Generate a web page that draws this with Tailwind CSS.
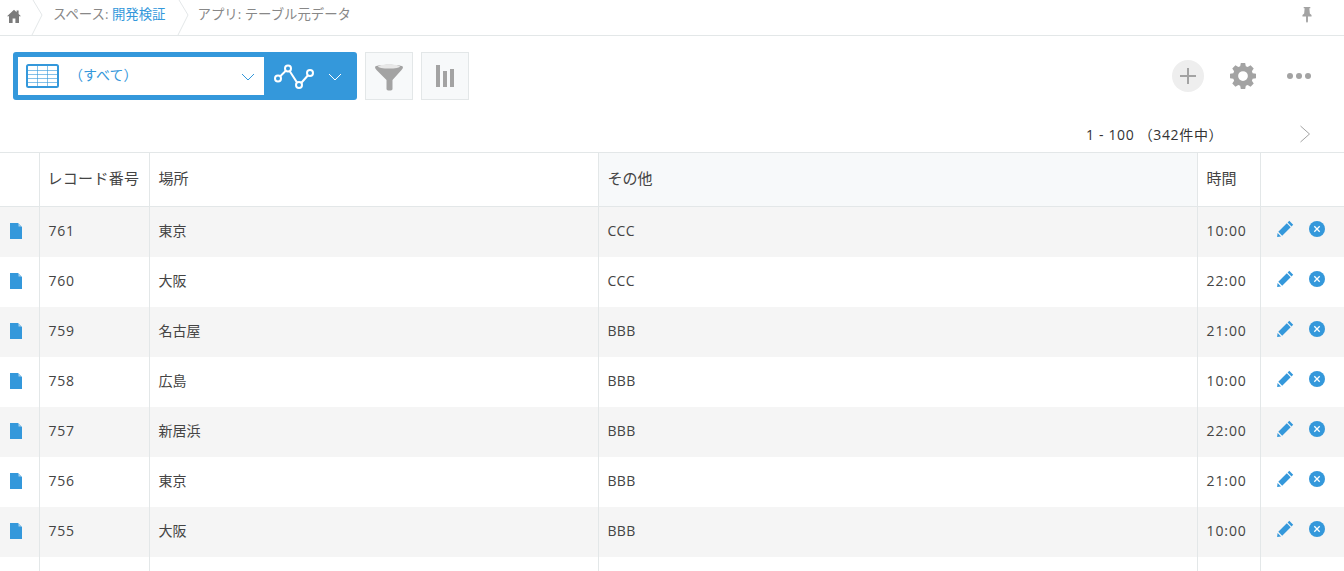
<!DOCTYPE html>
<html lang="ja">
  <head>
    <meta charset="UTF-8" />
    <title>アプリ: テーブル元データ</title>
    <script src="https://cdn.jsdelivr.net/npm/@tailwindcss/browser@4"></script>
  </head>
  <body class="bg-white h-[571px] w-[1344px] overflow-hidden text-[14px] text-[#444] font-['Open_Sans','Noto_Sans_CJK_JP',sans-serif]">
    <!-- breadcrumb -->
    <div class="h-9 border-b border-[#e3e7e8] flex items-center relative text-[#888]">
      <div class="w-[28px] flex justify-center pb-[4px]">
        <svg width="14" height="14" viewBox="0 0 14 14" fill="#7b7b7b"><path d="M7 .8 0 7.2h2V14h3.6V9.4h2.8V14H12V7.2h2L11.6 5V1.4H9.6v1.8z" /></svg>
      </div>
      <svg class="absolute left-[30px] top-0" width="14" height="35" viewBox="0 0 14 35" fill="none" stroke="#e3e7e8"><path d="M3 0l9 15-10 20" /></svg>
      <div class="ml-[25px] pb-[6px] text-[13.4px] leading-none">スペース: <span class="text-[#3498db]">開発検証</span></div>
      <svg class="absolute left-[176px] top-0" width="14" height="35" viewBox="0 0 14 35" fill="none" stroke="#e3e7e8"><path d="M3 0l9 15-10 20" /></svg>
      <div class="ml-[32px] pb-[6px] text-[13.4px] leading-none">アプリ: テーブル元データ</div>
      <svg class="absolute left-[1300px] top-[6px]" width="14" height="17" viewBox="0 0 14 18" fill="#a3a3a3"><path d="M3.500 1h7v1.500H9.500L10 8l1.800 1.500V11H8v5.500L7 18l-1-1.500V11H2.200V9.500L4 8l.5-5.500h-1z" /></svg>
    </div>

    <!-- toolbar -->
    <div class="h-[116px] relative">
      <div class="flex items-start pt-[16px] pl-[13px]">
        <div class="w-[344px] h-[48px] bg-[#3498db] rounded-[3px] p-[5px] flex">
          <div class="w-[246px] h-[38px] bg-white flex items-center pl-[8px] text-[#3498db]">
            <svg width="33" height="24" viewBox="0 0 33 24" fill="none" stroke="#3498db"><rect x="1" y="1" width="31" height="22" rx="1.500" stroke-width="2" /><path d="M1 6.500h31M1 10.500h31M1 14.500h31M1 18.500h31M11.500 2v20M21.500 2v20" stroke-width="1" opacity=".6" /></svg>
            <span class="ml-[10px] text-[14px] w-[172px] pb-[3px]">（すべて）</span>
            <svg width="14" height="8" viewBox="0 0 14 8" fill="none" stroke="#3498db" class="mt-[2px]"><path d="M1 1l6 6 6-6" /></svg>
          </div>
          <div class="flex-1 flex items-center pl-[9px]">
            <svg width="42" height="26" viewBox="0 0 42 26" fill="none" stroke="#fff" stroke-width="2"><path d="M5 15.500L15 5.500l11 17L37 10" /><circle cx="5" cy="15.500" r="3" fill="#3498db" /><circle cx="15" cy="5.500" r="3" fill="#3498db" /><circle cx="26" cy="22" r="3" fill="#3498db" /><circle cx="37" cy="10" r="3" fill="#3498db" /></svg>
            <svg width="14" height="8" viewBox="0 0 14 8" fill="none" stroke="#fff" class="ml-[13px] mt-[2px]"><path d="M1 1l6 6 6-6" /></svg>
          </div>
        </div>
        <div class="ml-2 w-[48px] h-[48px] bg-[#f7f9fa] border border-[#e3e7e8] flex items-center justify-center">
          <svg width="30" height="30" viewBox="0 0 30 30"><path d="M1 6C1 3 29 3 29 6c0 1-.5 2-1.500 3L18.500 19v9c0 2-6 2-6 0v-9L2.500 9C1.500 8 1 7 1 6z" fill="#a3a3a3" /><ellipse cx="15" cy="5.500" rx="11" ry="2" fill="#e8e8e8" /></svg>
        </div>
        <div class="ml-2 w-[48px] h-[48px] bg-[#f7f9fa] border border-[#e3e7e8] flex items-center justify-center">
          <svg width="18" height="22" viewBox="0 0 18 22" fill="#a3a3a3"><rect x="0" y="0" width="4" height="22" /><rect x="7" y="6" width="4" height="16" /><rect x="14" y="4" width="4" height="18" /></svg>
        </div>
        <div class="ml-auto flex items-center h-[48px] pr-[33px]">
          <div class="w-[32px] h-[32px] rounded-full bg-[#eee] flex items-center justify-center">
            <svg width="18" height="18" viewBox="0 0 18 18" stroke="#a3a3a3" stroke-width="2"><path d="M9 1v16M1 9h16" /></svg>
          </div>
          <svg class="ml-[26px]" width="26" height="26" viewBox="0 0 24 24" fill="#a3a3a3"><path fill-rule="evenodd" d="M10 1h4l.6 3.100 1.700.7L19 3.100 21.900 6l-1.700 2.700.7 1.700L24 11v4l-3.100.6-.7 1.700 1.700 2.700-2.900 2.900-2.700-1.700-1.700.7L14 25h-4l-.6-3.100-1.700-.7L5 22.900 2.100 20l1.700-2.700-.7-1.700L0 15v-4l3.100-.6.7-1.700L2.100 6 5 3.100l2.700 1.700 1.700-.7zM12 8.500a4.500 4.500 0 1 0 0 9 4.500 4.500 0 0 0 0-9z" transform="translate(0 -1)" /></svg>
          <div class="ml-[31px] flex gap-[3px]">
            <span class="w-[6px] h-[6px] rounded-full bg-[#a3a3a3]"></span>
            <span class="w-[6px] h-[6px] rounded-full bg-[#a3a3a3]"></span>
            <span class="w-[6px] h-[6px] rounded-full bg-[#a3a3a3]"></span>
          </div>
        </div>
      </div>
      <div class="flex items-center mt-[24px] h-[20px]">
        <div class="ml-[1086px] w-[213px] text-[14px] tracking-[0.65px] text-[#333]">1 - 100 （342件中）</div>
        <svg width="12" height="18" viewBox="0 0 12 18" fill="none" stroke="#a3a3a3"><path d="M1.500 1l9 8-9 8" /></svg>
      </div>
    </div>

    <!-- records -->
    <table class="table-fixed border-collapse w-[1344px] border-t border-[#e3e7e8]">
      <colgroup>
        <col class="w-[39px]" /><col class="w-[110px]" /><col class="w-[449px]" /><col class="w-[599px]" /><col class="w-[63px]" /><col />
      </colgroup>
      <thead>
        <tr class="h-[54px] text-left text-[15px]">
          <th class="font-normal border-r border-b border-[#e3e7e8]"></th>
          <th class="font-normal border-r border-b border-[#e3e7e8] pl-2 pb-[2px] tracking-[0.3px]">レコード番号</th>
          <th class="font-normal border-r border-b border-[#e3e7e8] pl-[9px] pb-[2px]">場所</th>
          <th class="font-normal border-r border-b border-[#e3e7e8] pl-[9px] pb-[2px] bg-[#f7f9fa]">その他</th>
          <th class="font-normal border-r border-b border-[#e3e7e8] pl-[9px] pb-[2px]">時間</th>
          <th class="font-normal border-b border-[#e3e7e8]"></th>
        </tr>
      </thead>
      <tbody id="rows"></tbody>
    </table>

    <script>
      const records = [
        [761, "東京", "CCC", "10:00"],
        [760, "大阪", "CCC", "22:00"],
        [759, "名古屋", "BBB", "21:00"],
        [758, "広島", "BBB", "10:00"],
        [757, "新居浜", "BBB", "22:00"],
        [756, "東京", "BBB", "21:00"],
        [755, "大阪", "BBB", "10:00"],
      ];

      document.getElementById("rows").innerHTML =
        records
          .map(
            (r, i) => `
          <tr class="h-[50px] ${i % 2 === 0 ? "bg-[#f5f5f5]" : "bg-white"}">
            <td class="border-r border-[#e3e7e8] pl-[10px]">
              <svg class="mb-[2px]" width="12" height="16" viewBox="0 0 12 16"><path d="M0 0h8l4 4v12H0z" fill="#3498db" /><path d="M8.500 .5l3 3h-3z" fill="#a9d2ee" /></svg>
            </td>
            <td class="border-r border-[#e3e7e8] pl-[9px] pb-[2px] tracking-[0.8px]">${r[0]}</td>
            <td class="border-r border-[#e3e7e8] pl-[9px] pb-[2px]">${r[1]}</td>
            <td class="border-r border-[#e3e7e8] pl-[9px] pb-[2px] tracking-[0.3px]">${r[2]}</td>
            <td class="border-r border-[#e3e7e8] pl-[9px] pb-[2px] tracking-[0.9px]">${r[3]}</td>
            <td class="pl-[16px]">
              <div class="flex items-center mb-[6px]">
                <svg width="17" height="17" viewBox="0 0 17 17" fill="#3498db"><path d="M12.300 .8l3.900 3.900-1.700 1.700-3.900-3.900zM9.800 3.300l3.900 3.900-8.500 8.500-3.900-3.900zM.6 13l3.400 3.400-3.900.6z" /></svg>
                <svg class="ml-[15px]" width="16" height="16" viewBox="0 0 16 16"><circle cx="8" cy="8" r="8" fill="#3498db" /><path d="M5.300 5.300l5.400 5.400M10.700 5.300l-5.400 5.400" stroke="#fff" stroke-width="1.300" /></svg>
              </div>
            </td>
          </tr>`
          )
          .join("") +
        // next row only shows its cell borders above the fold
        `<tr class="h-[14px]"><td class="border-r border-[#e3e7e8]"></td><td class="border-r border-[#e3e7e8]"></td><td class="border-r border-[#e3e7e8]"></td><td class="border-r border-[#e3e7e8]"></td><td class="border-r border-[#e3e7e8]"></td><td></td></tr>`;
    </script>
  </body>
</html>
